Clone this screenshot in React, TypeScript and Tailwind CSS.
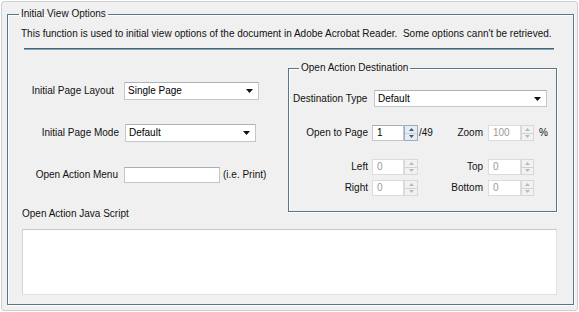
const Tri = ({ down, color }: { down?: boolean; color: string }) => (
  <svg width="5" height="3" viewBox="0 0 5 3" className="block">
    <path d={down ? "M0 0H5L2.5 3Z" : "M0 3H5L2.5 0Z"} fill={color} />
  </svg>
);

const Combo = ({ value, className }: { value: string; className: string }) => (
  <div
    className={`flex items-center justify-between bg-white border border-[#c3c6cb] border-t-[#aeb2b8] pl-[3px] pr-[5px] text-black ${className}`}
  >
    <span>{value}</span>
    <svg width="7" height="4" viewBox="0 0 7 4">
      <path d="M0 0H7L3.5 4Z" fill="#111" />
    </svg>
  </div>
);

const Spin = ({
  value,
  disabled,
  w,
  bw,
}: {
  value: string;
  disabled?: boolean;
  w: string;
  bw: string;
}) => (
  <div className="flex h-[16px]">
    <div
      className={`${w} h-full flex items-center pl-[4px] border ${
        disabled
          ? "bg-white border-[#dcdcdc] text-[#9a9a9a]"
          : "bg-white border-[#c3c6cb] border-t-[#a9adb4] text-black"
      }`}
    >
      {value}
    </div>
    <div
      className={`${bw} h-full flex flex-col border ${
        disabled ? "border-[#d8d8d8] bg-[#f2f2f2]" : "border-[#9aaec2] bg-[#e4ecf4]"
      }`}
    >
      <div className="flex-1 flex items-center justify-center border-b border-b-[#c9d3dd]">
        <Tri color={disabled ? "#b9b9b9" : "#4a5a6c"} />
      </div>
      <div className="flex-1 flex items-center justify-center">
        <Tri down color={disabled ? "#b9b9b9" : "#4a5a6c"} />
      </div>
    </div>
  </div>
);

export default function App() {
  return (
    <div className="w-[579px] h-[312px] bg-white p-[1px] font-['Liberation_Sans',Arial,sans-serif] text-[10px] leading-[14px] text-[#111]">
      <div className="h-full flex flex-col border border-[#cfcfcf] rounded-[3px] bg-[#f0f0f0] pl-[5px] pr-[4px] pt-[5px] pb-[5px]">
        <fieldset className="flex-1 min-h-0 border border-[#55768b] shadow-[inset_1px_1px_0_#ffffff,1px_1px_0_#ffffff] pl-[14px] pr-[16px]">
          <legend className="ml-[-3px] px-[2px]">Initial View Options</legend>

          <p className="mt-[6px] ml-[-1px] whitespace-pre">
            This function is used to initial view options of the document in Adobe Acrobat Reader.  Some options cann't be retrieved.
          </p>
          <div className="mt-[7px] ml-[2px] mr-[3px] h-[2px] bg-[#3f6779] border-b border-b-[#8aa3b1]" />

          <div className="flex h-[162px]">
            {/* left side */}
            <div className="w-[266px] shrink-0 flex flex-col">
              <div className="mt-[32px] flex items-center">
                <div className="w-[92px] text-right">Initial Page Layout</div>
                <Combo value="Single Page" className="ml-[10px] w-[135px] h-[18px]" />
              </div>
              <div className="mt-[24px] flex items-center">
                <div className="w-[97px] text-right">Initial Page Mode</div>
                <Combo value="Default" className="ml-[6px] w-[131px] h-[18px]" />
              </div>
              <div className="mt-[25px] flex items-center">
                <div className="w-[96px] text-right">Open Action Menu</div>
                <div className="ml-[6px] w-[96px] h-[16px] bg-white border border-[#c3c6cb] border-t-[#a9adb4]" />
                <span className="ml-[3px]">(i.e. Print)</span>
              </div>
            </div>

            {/* open action destination */}
            <fieldset className="mt-[11px] w-[269px] h-[151px] shrink-0 border border-[#55768b] shadow-[inset_1px_1px_0_#ffffff,1px_1px_0_#ffffff] pl-[4px]">
              <legend className="ml-[6px] px-[2px]">Open Action Destination</legend>
              <div className="mt-[15px] flex items-center">
                <div className="w-[81px]">Destination Type</div>
                <Combo value="Default" className="w-[173px] h-[17px]" />
              </div>
              <div className="mt-[18px] flex items-center">
                <div className="w-[75px] text-right">Open to Page</div>
                <div className="ml-[4px]">
                  <Spin value="1" w="w-[32px]" bw="w-[14px]" />
                </div>
                <div className="w-[20px] pl-[1px]">/49</div>
                <div className="w-[45px] text-right">Zoom</div>
                <div className="ml-[5px]">
                  <Spin value="100" disabled w="w-[33px]" bw="w-[13px]" />
                </div>
                <span className="ml-[5px]">%</span>
              </div>
              <div className="mt-[18px] flex items-center">
                <div className="w-[75px] text-right">Left</div>
                <div className="ml-[4px]">
                  <Spin value="0" disabled w="w-[32px]" bw="w-[14px]" />
                </div>
                <div className="w-[65px] text-right">Top</div>
                <div className="ml-[5px]">
                  <Spin value="0" disabled w="w-[33px]" bw="w-[13px]" />
                </div>
              </div>
              <div className="mt-[5px] flex items-center">
                <div className="w-[75px] text-right">Right</div>
                <div className="ml-[4px]">
                  <Spin value="0" disabled w="w-[32px]" bw="w-[14px]" />
                </div>
                <div className="w-[65px] text-right">Bottom</div>
                <div className="ml-[5px]">
                  <Spin value="0" disabled w="w-[33px]" bw="w-[13px]" />
                </div>
              </div>
            </fieldset>
          </div>

          <div className="mt-[-5px]">Open Action Java Script</div>
          <div className="mt-[8px] h-[66px] bg-white border border-[#e1e1e1] border-t-[#c8c8c8] border-l-[#d4d4d4]" />
        </fieldset>
      </div>
    </div>
  );
}
